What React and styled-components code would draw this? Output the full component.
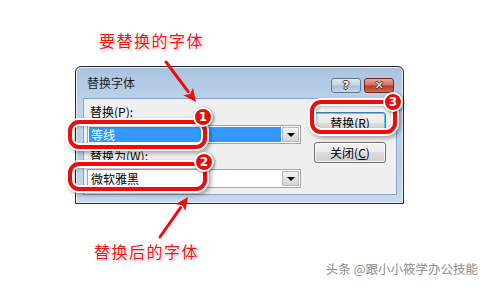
import React from 'react';
import styled, { createGlobalStyle } from 'styled-components';

const GlobalStyle = createGlobalStyle`
  html, body {
    margin: 0;
    padding: 0;
    background: #ffffff;
  }
  body {
    font-family: "Noto Sans CJK SC", "Noto Sans", sans-serif;
  }
`;

const Page = styled.div`
  position: relative;
  width: 485px;
  height: 292px;
  overflow: hidden;
  padding: 66px 0 0 75px;
  box-sizing: border-box;
`;

const Dialog = styled.div`
  width: 329px;
  height: 138px;
  box-sizing: border-box;
  border: 1px solid #2b2b2b;
  border-radius: 6px 6px 0 0;
  background: linear-gradient(180deg, #a9c3e0 0%, #c0d5ed 30%, #b9d0ea 70%, #c7daee 100%);
  box-shadow: inset 0 0 0 1px rgba(255, 255, 255, 0.7);
  display: flex;
  flex-direction: column;
`;

const TitleBar = styled.div`
  height: 31px;
  display: flex;
  align-items: center;
  justify-content: space-between;
  padding: 0 9px 0 11px;
`;

const Title = styled.span`
  font-size: 12px;
  color: #1e1e1e;
`;

const CaptionButtons = styled.div`
  display: flex;
  gap: 3px;
  align-self: flex-start;
  margin-top: 11px;
`;

const CaptionButton = styled.div`
  width: 30px;
  height: 15px;
  box-sizing: border-box;
  border: 1px solid ${p => (p.$close ? '#6e2a22' : '#5f7490')};
  border-radius: 3px;
  background: ${p =>
    p.$close
      ? 'linear-gradient(180deg, #e9a89b 0%, #d4705f 45%, #bd3a25 55%, #d36b52 100%)'
      : 'linear-gradient(180deg, #dfe8f3 0%, #c3d3e6 45%, #a9bfd9 55%, #c2d4e9 100%)'};
  display: flex;
  align-items: center;
  justify-content: center;
  font-family: "DejaVu Sans", sans-serif;
  font-weight: bold;
  font-size: 11px;
  line-height: 1;
  color: #fff;
  text-shadow: 1px 0 0 #3a3a3a, -1px 0 0 #3a3a3a, 0 1px 0 #3a3a3a, 0 -1px 0 #3a3a3a;
`;

const Body = styled.div`
  flex: 1;
  margin: 0 6px 8px 7px;
  background: #f0f0f0;
  border: 1px solid #8aa5c7;
  display: flex;
  gap: 13px;
  padding: 5px 10px 0 3px;
`;

const Fields = styled.div`
  width: 216px;
  display: flex;
  flex-direction: column;
`;

const Label = styled.div`
  font-size: 12px;
  line-height: 16px;
  color: #000;
  padding-left: 3px;
  margin: ${p => (p.$second ? '4px' : '0')} 0 5px 0;
`;

const Combo = styled.div`
  height: 19px;
  box-sizing: border-box;
  border: 1px solid #a5a5a5;
  background: #fff;
  display: flex;
  align-items: stretch;
  padding: 1px;
`;

const ComboText = styled.div`
  flex: 1;
  display: flex;
  align-items: center;
  padding-left: 2px;
  margin-right: 1px;
  font-size: 12px;
  color: ${p => (p.$selected ? '#fff' : '#000')};
  background: ${p => (p.$selected ? '#3399ff' : 'transparent')};
`;

const DropButton = styled.div`
  width: 17px;
  box-sizing: border-box;
  border: 1px solid #b8b8b8;
  background: linear-gradient(180deg, #f4f4f4 0%, #e2e2e2 50%, #d6d6d6 100%);
  display: flex;
  align-items: center;
  justify-content: center;

  &::after {
    content: '';
    border-left: 4px solid transparent;
    border-right: 4px solid transparent;
    border-top: 4px solid #000;
  }
`;

const Actions = styled.div`
  display: flex;
  flex-direction: column;
  gap: 9px;
  padding-top: 8px;
`;

const Button = styled.div`
  width: 72px;
  height: 21px;
  box-sizing: border-box;
  border: 1px solid ${p => (p.$default ? '#3c7fb1' : '#707070')};
  border-radius: 3px;
  background: linear-gradient(180deg, #f2f2f2 0%, #ebebeb 50%, #dddddd 50%, #cfcfcf 100%);
  box-shadow: inset 0 0 0 1px ${p => (p.$default ? '#48d1f5' : 'rgba(255,255,255,0.8)')};
  display: flex;
  align-items: center;
  justify-content: center;
  font-size: 12px;
  color: #000;

  u {
    text-decoration: underline;
    text-underline-offset: 1px;
  }
`;

const Ring = styled.div`
  position: absolute;
  left: ${p => p.$x}px;
  top: ${p => p.$y}px;
  width: ${p => p.$w}px;
  height: ${p => p.$h}px;
  box-sizing: border-box;
  border: 4px solid #ee0c0c;
  border-radius: 11px;
  box-shadow: 0 0 0 2px #ffffff, 2px 2px 4px 2px rgba(0, 0, 0, 0.35),
    inset 0 0 0 2px #ffffff, inset 1px 1px 3px 2px rgba(0, 0, 0, 0.25);
`;

const Badge = styled.div`
  position: absolute;
  left: ${p => p.$x - 10}px;
  top: ${p => p.$y - 10}px;
  width: 20px;
  height: 20px;
  box-sizing: border-box;
  border-radius: 50%;
  background: #e80c0c;
  border: 2px solid #ffffff;
  box-shadow: 1px 1px 3px rgba(0, 0, 0, 0.5);
  display: flex;
  align-items: center;
  justify-content: center;
  font-family: "DejaVu Sans", sans-serif;
  font-weight: bold;
  font-size: 12px;
  color: #fff;
`;

const Callout = styled.div`
  position: absolute;
  left: ${p => p.$x}px;
  top: ${p => p.$y}px;
  font-size: 16px;
  line-height: 18px;
  letter-spacing: 1.5px;
  color: #f01414;
  text-shadow: 0 0 2px #fff, 0 0 2px #fff, 0 0 3px #fff, 1px 1px 3px rgba(0, 0, 0, 0.45);
  white-space: nowrap;
`;

const Arrows = styled.svg`
  position: absolute;
  left: 0;
  top: 0;
  pointer-events: none;
`;

const Watermark = styled.div`
  position: absolute;
  right: 7px;
  bottom: 14px;
  font-size: 12.5px;
  color: #8c8c8c;
  white-space: nowrap;
`;

const Arrow = ({ x1, y1, x2, y2 }) => {
  const ang = Math.atan2(y2 - y1, x2 - x1);
  const len = 13;
  const wid = 6;
  const bx = x2 - Math.cos(ang) * len;
  const by = y2 - Math.sin(ang) * len;
  const px = -Math.sin(ang) * wid;
  const py = Math.cos(ang) * wid;
  return (
    <g>
      <line x1={x1} y1={y1} x2={bx} y2={by} stroke="#ee0c0c" strokeWidth="3" strokeLinecap="round" />
      <polygon
        points={`${x2},${y2} ${bx + px},${by + py} ${bx + Math.cos(ang) * 3},${by + Math.sin(ang) * 3} ${bx - px},${by - py}`}
        fill="#ee0c0c"
      />
    </g>
  );
};

export default function App() {
  return (
    <>
      <GlobalStyle />
      <Page>
        <Dialog>
          <TitleBar>
            <Title>替换字体</Title>
            <CaptionButtons>
              <CaptionButton>?</CaptionButton>
              <CaptionButton $close>✕</CaptionButton>
            </CaptionButtons>
          </TitleBar>
          <Body>
            <Fields>
              <Label>替换(P):</Label>
              <Combo>
                <ComboText $selected>等线</ComboText>
                <DropButton />
              </Combo>
              <Label $second>替换为(W):</Label>
              <Combo>
                <ComboText>微软雅黑</ComboText>
                <DropButton />
              </Combo>
            </Fields>
            <Actions>
              <Button $default>替换(<u>R</u>)</Button>
              <Button>关闭(<u>C</u>)</Button>
            </Actions>
          </Body>
        </Dialog>

        <Ring $x={68} $y={120} $w={139} $h={29} />
        <Ring $x={68} $y={162} $w={139} $h={29} />
        <Ring $x={310} $y={100} $w={87} $h={34} />

        <Badge $x={203} $y={117}>1</Badge>
        <Badge $x={204} $y={162}>2</Badge>
        <Badge $x={393} $y={102}>3</Badge>

        <Arrows width="485" height="292">
          <Arrow x1={166} y1={62} x2={196} y2={102} />
          <Arrow x1={160} y1={237} x2={188} y2={197} />
        </Arrows>

        <Callout $x={99} $y={31}>要替换的字体</Callout>
        <Callout $x={94} $y={242}>替换后的字体</Callout>

        <Watermark>头条 @跟小小筱学办公技能</Watermark>
      </Page>
    </>
  );
}
